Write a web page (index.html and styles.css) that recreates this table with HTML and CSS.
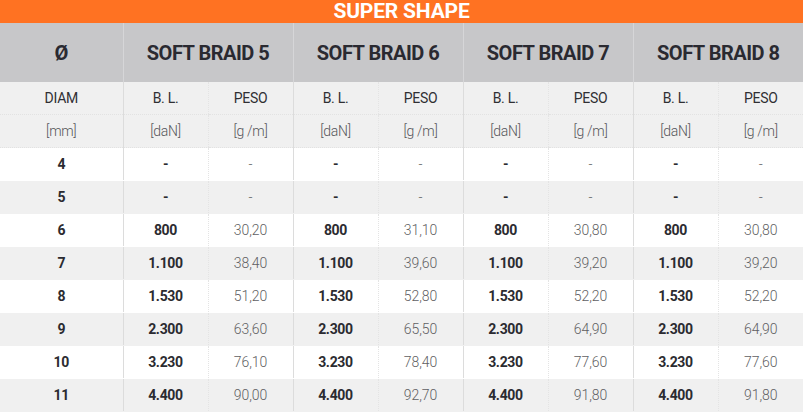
FILE: index.html
```html
<!DOCTYPE html>
<html>
<head>
<meta charset="utf-8">
<link rel="stylesheet" href="styles.css">
</head>
<body>
<table class="spec">
  <colgroup>
    <col class="c-diam">
    <col class="c-sub"><col class="c-sub">
    <col class="c-sub"><col class="c-sub">
    <col class="c-sub"><col class="c-sub">
    <col class="c-sub"><col class="c-sub">
  </colgroup>
  <thead>
    <tr class="title"><th colspan="9">SUPER SHAPE</th></tr>
    <tr class="groups">
      <th>Ø</th>
      <th colspan="2" class="g">SOFT BRAID 5</th>
      <th colspan="2" class="g">SOFT BRAID 6</th>
      <th colspan="2" class="g">SOFT BRAID 7</th>
      <th colspan="2" class="g">SOFT BRAID 8</th>
    </tr>
    <tr class="labels">
      <td>DIAM</td>
      <td class="g">B. L.</td><td class="s">PESO</td>
      <td class="g">B. L.</td><td class="s">PESO</td>
      <td class="g">B. L.</td><td class="s">PESO</td>
      <td class="g">B. L.</td><td class="s">PESO</td>
    </tr>
    <tr class="units">
      <td>[mm]</td>
      <td class="g">[daN]</td><td class="s">[g /m]</td>
      <td class="g">[daN]</td><td class="s">[g /m]</td>
      <td class="g">[daN]</td><td class="s">[g /m]</td>
      <td class="g">[daN]</td><td class="s">[g /m]</td>
    </tr>
  </thead>
  <tbody>
    <tr class="w"><td class="d">4</td><td class="g bl">-</td><td class="s p">-</td><td class="g bl">-</td><td class="s p">-</td><td class="g bl">-</td><td class="s p">-</td><td class="g bl">-</td><td class="s p">-</td></tr>
    <tr class="k"><td class="d">5</td><td class="g bl">-</td><td class="s p">-</td><td class="g bl">-</td><td class="s p">-</td><td class="g bl">-</td><td class="s p">-</td><td class="g bl">-</td><td class="s p">-</td></tr>
    <tr class="w"><td class="d">6</td><td class="g bl">800</td><td class="s p">30,20</td><td class="g bl">800</td><td class="s p">31,10</td><td class="g bl">800</td><td class="s p">30,80</td><td class="g bl">800</td><td class="s p">30,80</td></tr>
    <tr class="k"><td class="d">7</td><td class="g bl">1.100</td><td class="s p">38,40</td><td class="g bl">1.100</td><td class="s p">39,60</td><td class="g bl">1.100</td><td class="s p">39,20</td><td class="g bl">1.100</td><td class="s p">39,20</td></tr>
    <tr class="w"><td class="d">8</td><td class="g bl">1.530</td><td class="s p">51,20</td><td class="g bl">1.530</td><td class="s p">52,80</td><td class="g bl">1.530</td><td class="s p">52,20</td><td class="g bl">1.530</td><td class="s p">52,20</td></tr>
    <tr class="k"><td class="d">9</td><td class="g bl">2.300</td><td class="s p">63,60</td><td class="g bl">2.300</td><td class="s p">65,50</td><td class="g bl">2.300</td><td class="s p">64,90</td><td class="g bl">2.300</td><td class="s p">64,90</td></tr>
    <tr class="w"><td class="d">10</td><td class="g bl">3.230</td><td class="s p">76,10</td><td class="g bl">3.230</td><td class="s p">78,40</td><td class="g bl">3.230</td><td class="s p">77,60</td><td class="g bl">3.230</td><td class="s p">77,60</td></tr>
    <tr class="k"><td class="d">11</td><td class="g bl">4.400</td><td class="s p">90,00</td><td class="g bl">4.400</td><td class="s p">92,70</td><td class="g bl">4.400</td><td class="s p">91,80</td><td class="g bl">4.400</td><td class="s p">91,80</td></tr>
  </tbody>
</table>
</body>
</html>
```
FILE: styles.css
```css
html, body {
  margin: 0;
  padding: 0;
  background: #ffffff;
}
.spec {
  width: 803px;
  border-collapse: collapse;
  table-layout: fixed;
  font-family: "Roboto", "Liberation Sans", sans-serif;
  color: #2b2b30;
}
.c-diam { width: 123px; }
.c-sub { width: 85px; }
.spec th, .spec td {
  padding: 0;
  text-align: center;
  vertical-align: middle;
  white-space: nowrap;
}
.title th {
  height: 23px;
  background: #ff7222;
  color: #ffffff;
  font-size: 21px;
  font-weight: 700;
  line-height: 23px;
  letter-spacing: -0.2px;
}
.groups th {
  height: 59px;
  background: #c7c7c9;
  font-size: 20px;
  font-weight: 700;
  letter-spacing: -0.5px;
  color: #2a2a31;
}
.groups th.g {
  border-left: 1px solid #d6d6d8;
}
.labels td, .units td {
  height: 32px;
  background: #f0f0f0;
  font-size: 14px;
  letter-spacing: -0.3px;
  color: #2f2f33;
  border-bottom: 1px dotted #e2e2e2;
}
.units td {
  color: #555559;
  font-weight: 300;
}
.spec td.g {
  border-left: 1px solid #dcdcdc;
}
.spec td.s {
  border-left: 1px dotted #e4e4e4;
}
tbody td {
  height: 32px;
  font-size: 14px;
  border-bottom: 1px solid transparent;
}
tbody tr.w td { background: #ffffff; }
tbody tr.k td { background: #f0f0f0; }
tbody td.d, tbody td.bl {
  font-weight: 700;
  color: #2b2b30;
  letter-spacing: -0.3px;
}
tbody td.p {
  color: #5f5f63;
  font-weight: 300;
}
```
